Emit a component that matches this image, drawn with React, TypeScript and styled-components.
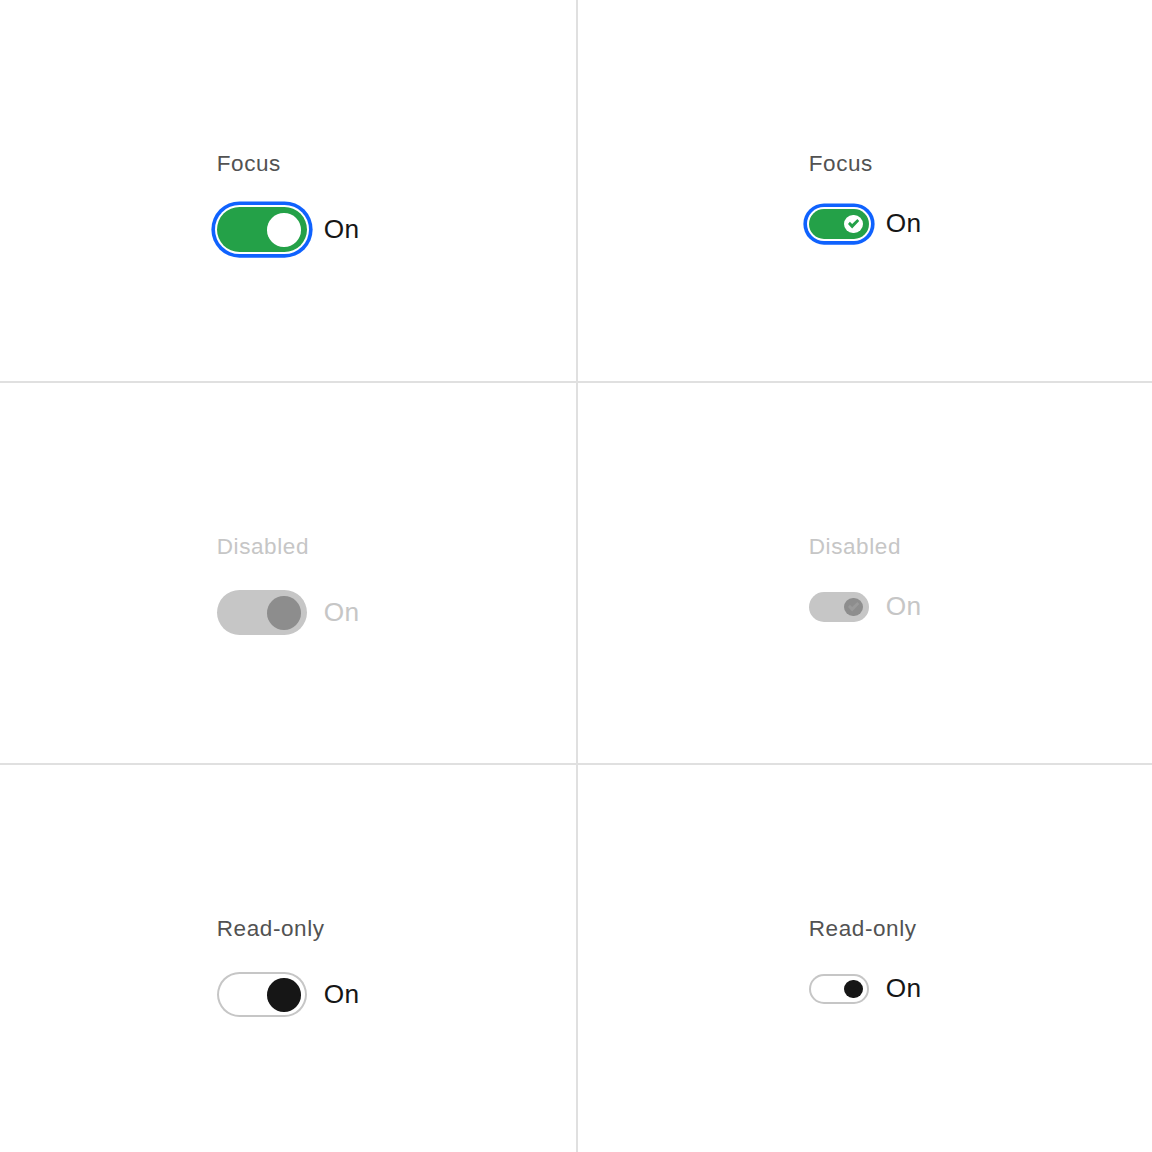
import React from 'react';
import styled, { createGlobalStyle, css } from 'styled-components';

// everything is drawn at 1.875x of the 16px base
const S = 1.875;
const px = (n: number) => `${n * S}px`;

type Size = 'md' | 'sm';
type Mode = 'focus' | 'disabled' | 'readonly';

const GlobalStyle = createGlobalStyle`
  html, body {
    margin: 0;
    padding: 0;
    background: #ffffff;
  }
  body {
    font-family: "Liberation Sans", Arial, sans-serif;
  }
`;

const Board = styled.div`
  width: 1152px;
  height: 1152px;
  display: grid;
  grid-template-columns: 576px 1fr;
  grid-template-rows: 381px 380px 1fr;
  gap: 2px;
  background: #e0e0e0;
`;

const Cell = styled.div`
  background: #ffffff;
  display: flex;
  justify-content: center;
  align-items: flex-start;
  padding-top: 149px;
`;

const Field = styled.div`
  display: flex;
  flex-direction: column;
`;

const Label = styled.span<{ $mode: Mode }>`
  font-size: ${px(12)};
  line-height: ${px(16)};
  letter-spacing: ${px(0.32)};
  color: ${({ $mode }) => ($mode === 'disabled' ? '#c6c6c6' : '#525252')};
  margin-bottom: ${px(15)};
`;

const Row = styled.div`
  display: flex;
  align-items: center;
  gap: 17px;
  min-height: ${px(18)};
`;

const Track = styled.div<{ $size: Size; $mode: Mode }>`
  position: relative;
  box-sizing: border-box;
  width: ${({ $size }) => ($size === 'md' ? px(48) : px(32))};
  height: ${({ $size }) => ($size === 'md' ? px(24) : px(16))};
  border-radius: ${px(12)};
  flex-shrink: 0;
  ${({ $mode }) =>
    $mode === 'focus' &&
    css`
      background: #24a148;
      box-shadow: 0 0 0 2px #ffffff, 0 0 0 ${px(3)} #0f62fe;
    `}
  ${({ $mode }) =>
    $mode === 'disabled' &&
    css`
      background: #c6c6c6;
    `}
  ${({ $mode }) =>
    $mode === 'readonly' &&
    css`
      background: transparent;
      box-shadow: inset 0 0 0 2px #c6c6c6;
    `}
`;

const Knob = styled.span<{ $size: Size; $mode: Mode }>`
  position: absolute;
  top: ${px(3)};
  right: ${px(3)};
  width: ${({ $size }) => ($size === 'md' ? px(18) : px(10))};
  height: ${({ $size }) => ($size === 'md' ? px(18) : px(10))};
  border-radius: 50%;
  display: flex;
  align-items: center;
  justify-content: center;
  background: ${({ $mode }) =>
    $mode === 'focus' ? '#ffffff' : $mode === 'disabled' ? '#8d8d8d' : '#161616'};
`;

const Check = styled.svg<{ $mode: Mode }>`
  width: ${px(6)};
  height: ${px(5)};
  fill: ${({ $mode }) => ($mode === 'focus' ? '#24a148' : $mode === 'disabled' ? '#9a9a9a' : '#161616')};
`;

const State = styled.span<{ $mode: Mode }>`
  font-size: ${px(14)};
  line-height: ${px(18)};
  letter-spacing: ${px(0.16)};
  color: ${({ $mode }) => ($mode === 'disabled' ? '#c6c6c6' : '#161616')};
`;

const titles: Record<Mode, string> = {
  focus: 'Focus',
  disabled: 'Disabled',
  readonly: 'Read-only',
};

const Toggle = ({ size, mode }: { size: Size; mode: Mode }) => (
  <Field>
    <Label $mode={mode}>{titles[mode]}</Label>
    <Row>
      <Track $size={size} $mode={mode}>
        <Knob $size={size} $mode={mode}>
          {size === 'sm' && (
            <Check $mode={mode} viewBox="0 0 6 5">
              <path d="M2.2 2.7L5 0 6 1 2.2 5 0 2.7 1 1.5z" />
            </Check>
          )}
        </Knob>
      </Track>
      <State $mode={mode}>On</State>
    </Row>
  </Field>
);

const modes: Mode[] = ['focus', 'disabled', 'readonly'];

export default function App() {
  return (
    <>
      <GlobalStyle />
      <Board>
        {modes.map((mode) => (
          <React.Fragment key={mode}>
            <Cell>
              <Toggle size="md" mode={mode} />
            </Cell>
            <Cell>
              <Toggle size="sm" mode={mode} />
            </Cell>
          </React.Fragment>
        ))}
      </Board>
    </>
  );
}
